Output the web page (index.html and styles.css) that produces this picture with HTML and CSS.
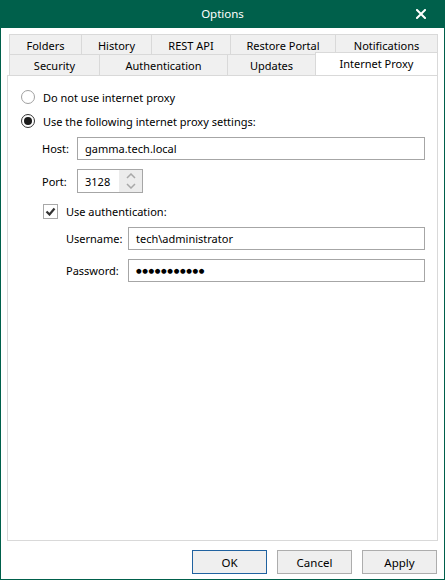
FILE: index.html
```html
<!DOCTYPE html>
<html>
<head>
<meta charset="utf-8">
<link rel="stylesheet" href="styles.css">
</head>
<body>
<div class="window">
  <div class="titlebar">
    <span class="title">Options</span>
    <svg class="close" width="10" height="10" viewBox="0 0 10 10"><path d="M1 1L9 9M9 1L1 9" stroke="#fff" stroke-width="2" stroke-linecap="square"/></svg>
  </div>
  <div class="body">
    <div class="tabs">
      <div class="tabrow">
        <div class="tab w-folders">Folders</div>
        <div class="tab w-history">History</div>
        <div class="tab w-rest">REST API</div>
        <div class="tab w-restore">Restore Portal</div>
        <div class="tab w-notif">Notifications</div>
      </div>
      <div class="tabrow row2">
        <div class="tab w-security">Security</div>
        <div class="tab w-auth">Authentication</div>
        <div class="tab w-updates">Updates</div>
        <div class="tab active w-proxy">Internet Proxy</div>
      </div>
    </div>
    <div class="panel">
      <div class="radio-row r1">
        <span class="radio"></span><span>Do not use internet proxy</span>
      </div>
      <div class="radio-row r2">
        <span class="radio checked"></span><span>Use the following internet proxy settings:</span>
      </div>
      <div class="field host-row">
        <span class="label l-host">Host:</span>
        <div class="input grow">gamma.tech.local</div>
      </div>
      <div class="field port-row">
        <span class="label l-host">Port:</span>
        <div class="input spin">
          <span class="spin-val">3128</span>
          <span class="spin-btns">
            <svg width="10" height="6" viewBox="0 0 10 6"><path d="M1 5L5 1L9 5" fill="none" stroke="#a8a8a8" stroke-width="1.5"/></svg>
            <svg width="10" height="6" viewBox="0 0 10 6"><path d="M1 1L5 5L9 1" fill="none" stroke="#a8a8a8" stroke-width="1.5"/></svg>
          </span>
        </div>
      </div>
      <div class="check-row">
        <span class="checkbox"><svg width="11" height="9" viewBox="0 0 11 9"><path d="M1.5 4.5L4.5 7.5L9.5 1.5" fill="none" stroke="#333" stroke-width="2.2"/></svg></span>
        <span>Use authentication:</span>
      </div>
      <div class="field user-row">
        <span class="label l-user">Username:</span>
        <div class="input grow">tech\administrator</div>
      </div>
      <div class="field pass-row">
        <span class="label l-user">Password:</span>
        <div class="input grow"><span class="dots">●●●●●●●●●●●</span></div>
      </div>
    </div>
    <div class="buttons">
      <div class="btn default">OK</div>
      <div class="btn">Cancel</div>
      <div class="btn">Apply</div>
    </div>
  </div>
</div>
</body>
</html>
```

FILE: styles.css
```css
* { box-sizing: border-box; }
html, body { margin: 0; padding: 0; background: #fff; }
body {
  font-family: "Noto Sans", "Open Sans", sans-serif;
  font-size: 11px;
  color: #000;
}
.window { width: 445px; height: 580px; display: flex; flex-direction: column; }
.titlebar {
  height: 28px;
  background: #00604b;
  color: #fff;
  position: relative;
  display: flex;
  align-items: center;
  justify-content: center;
  flex: none;
}
.title { font-size: 11.5px; line-height: 28px; }
.close { position: absolute; left: 416px; top: 9px; }
.body {
  flex: 1;
  border: 1px solid #00604b;
  border-top: none;
  padding: 6px 6px 0 6px;
  display: flex;
  flex-direction: column;
}
.tabs { margin-left: 2px; width: 429px; position: relative; z-index: 1; }
.tabrow { display: flex; height: 20px; }
.tabrow.row2 { height: 21px; }
.tab {
  height: 100%;
  background: #f0f0f0;
  border: 1px solid #d9d9d9;
  border-bottom: none;
  margin-right: -1px;
  display: flex;
  align-items: center;
  justify-content: center;
  padding-top: 1px;
  white-space: nowrap;
}
.tab.active {
  background: #fff;
  height: 23px;
  margin-top: -2px;
  padding-top: 0;
  padding-bottom: 2px;
}
.w-folders { width: 73px; }
.w-history { width: 71px; }
.w-rest { width: 80px; }
.w-restore { width: 106px; }
.w-notif { width: 103px; }
.w-security { width: 91px; }
.w-auth { width: 129px; }
.w-updates { width: 89px; }
.w-proxy { width: 123px; }

.panel {
  width: 431px;
  height: 466px;
  border: 1px solid #d9d9d9;
  padding: 12px 12px 0 13px;
  display: flex;
  flex-direction: column;
}
.radio-row { display: flex; align-items: center; height: 18px; gap: 8px; }
.r2 { margin-top: 6px; }
.radio {
  width: 14px; height: 14px;
  border: 1px solid #a0a0a0;
  border-radius: 50%;
  background: #fff;
  flex: none;
  display: flex; align-items: center; justify-content: center;
}
.radio.checked { border-color: #333; }
.radio.checked::after {
  content: "";
  width: 8px; height: 8px; border-radius: 50%;
  background: #1a1a1a;
}
.field { display: flex; align-items: center; height: 23px; padding-left: 21px; }
.host-row { margin-top: 7px; }
.port-row { margin-top: 9px; height: 24px; }
.label.l-host { width: 35px; flex: none; }
.label.l-user { width: 62px; flex: none; }
.user-row { margin-top: 8px; padding-left: 45px; }
.pass-row { margin-top: 9px; padding-left: 45px; }
.input {
  height: 100%;
  border: 1px solid #a6a6a6;
  background: #fff;
  display: flex; align-items: center;
  padding-left: 7px;
}
.grow { flex: 1; }
.spin { width: 66px; padding-left: 0; }
.spin-val { flex: 1; padding-left: 7px; }
.spin-btns {
  width: 23px; height: 100%;
  background: #ececec;
  display: flex; flex-direction: column; align-items: center; justify-content: center;
  gap: 4px;
}
.check-row { display: flex; align-items: center; height: 16px; margin-top: 10px; padding-left: 22px; gap: 8px; }
.checkbox {
  width: 15px; height: 15px; flex: none;
  border: 1px solid #a8a8a8;
  background: #fff;
  display: flex; align-items: center; justify-content: center;
}
.dots { font-family: "DejaVu Sans", sans-serif; font-size: 6.5px; letter-spacing: 0.6px; color: #000; }
.buttons {
  display: flex; justify-content: flex-end; gap: 10px;
  margin-top: 9px;
  padding-right: 1px;
}
.btn {
  width: 75px; height: 24px;
  border: 1px solid #adadad;
  background: #efefef;
  display: flex; align-items: center; justify-content: center;
  font-size: 11.5px;
}
.btn.default { border-color: #2062a0; }
```
